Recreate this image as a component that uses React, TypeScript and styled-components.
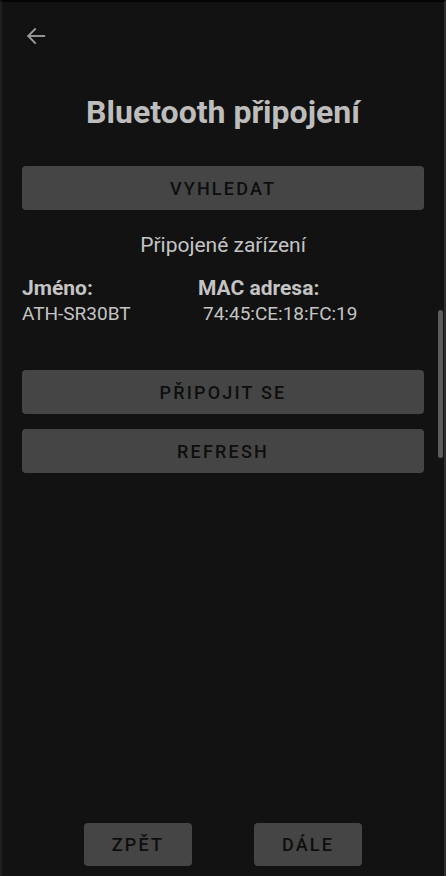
import styled, { createGlobalStyle } from "styled-components";

const GlobalStyle = createGlobalStyle`
  html, body {
    margin: 0;
    padding: 0;
    background: #121212;
  }
  * {
    box-sizing: border-box;
  }
`;

const Screen = styled.div`
  position: relative;
  width: 446px;
  height: 876px;
  background: #121212;
  border-top: 2px solid #050505;
  border-left: 2px solid #1f1f1f;
  border-right: 2px solid #2e2e2e;
  font-family: Roboto, "Noto Sans", sans-serif;
  display: flex;
  flex-direction: column;
  overflow: hidden;
`;

const TopBar = styled.div`
  height: 54px;
  display: flex;
  align-items: center;
  padding: 14px 0 0 22px;
`;

const BackBtn = styled.button`
  background: transparent;
  border: none;
  padding: 0;
  width: 24px;
  height: 24px;
  display: flex;
  align-items: center;
  justify-content: center;
  cursor: pointer;
`;

const Title = styled.h1`
  margin: 36px 0 0;
  text-align: center;
  font-size: 32px;
  font-weight: 700;
  color: #bdbdbd;
  line-height: 40px;
`;

const Content = styled.div`
  padding: 0 20px;
  display: flex;
  flex-direction: column;
`;

const WideBtn = styled.button<{ $top: number }>`
  margin-top: ${(p) => p.$top}px;
  height: 44px;
  width: 100%;
  border: none;
  border-radius: 4px;
  background: #454545;
  color: #0e0e0e;
  font-family: Roboto, "Noto Sans", sans-serif;
  font-size: 18px;
  font-weight: 500;
  letter-spacing: 2.2px;
  cursor: pointer;
`;

const Subtitle = styled.div`
  margin-top: 21px;
  text-align: center;
  font-size: 21px;
  color: #c4c4c4;
  line-height: 28px;
`;

const Info = styled.div`
  margin-top: 16px;
  display: grid;
  grid-template-columns: 176px 1fr;
  row-gap: 1px;
`;

const Label = styled.div`
  font-size: 21px;
  font-weight: 700;
  color: #c4c4c4;
  line-height: 26px;
`;

const Value = styled.div<{ $indent?: number }>`
  padding-left: ${(p) => p.$indent ?? 0}px;
  font-size: 19px;
  color: #c4c4c4;
  line-height: 24px;
`;

const Footer = styled.div`
  margin-top: auto;
  padding-bottom: 10px;
  display: flex;
  justify-content: center;
  gap: 62px;
`;

const SmallBtn = styled.button`
  width: 108px;
  height: 43px;
  border: none;
  border-radius: 4px;
  background: #454545;
  color: #0e0e0e;
  font-family: Roboto, "Noto Sans", sans-serif;
  font-size: 18px;
  font-weight: 500;
  letter-spacing: 2.2px;
  cursor: pointer;
`;

const ScrollThumb = styled.div`
  position: absolute;
  right: 1px;
  top: 308px;
  width: 5px;
  height: 148px;
  border-radius: 3px;
  background: #5c5c5c;
`;

const App = () => {
  return (
    <>
      <GlobalStyle />
      <Screen>
        <TopBar>
          <BackBtn aria-label="back">
            <svg width="22" height="22" viewBox="0 0 24 24" fill="none" stroke="#9e9e9e" strokeWidth="2" strokeLinecap="square">
              <path d="M21 12H4" />
              <path d="M11 4.5L3.5 12L11 19.5" />
            </svg>
          </BackBtn>
        </TopBar>
        <Title>Bluetooth připojení</Title>
        <Content>
          <WideBtn $top={34}>VYHLEDAT</WideBtn>
          <Subtitle>Připojené zařízení</Subtitle>
          <Info>
            <Label>Jméno:</Label>
            <Label>MAC adresa:</Label>
            <Value>ATH-SR30BT</Value>
            <Value $indent={5}>74:45:CE:18:FC:19</Value>
          </Info>
          <WideBtn $top={44}>PŘIPOJIT SE</WideBtn>
          <WideBtn $top={15}>REFRESH</WideBtn>
        </Content>
        <Footer>
          <SmallBtn>ZPĚT</SmallBtn>
          <SmallBtn>DÁLE</SmallBtn>
        </Footer>
        <ScrollThumb />
      </Screen>
    </>
  );
};

export default App;
